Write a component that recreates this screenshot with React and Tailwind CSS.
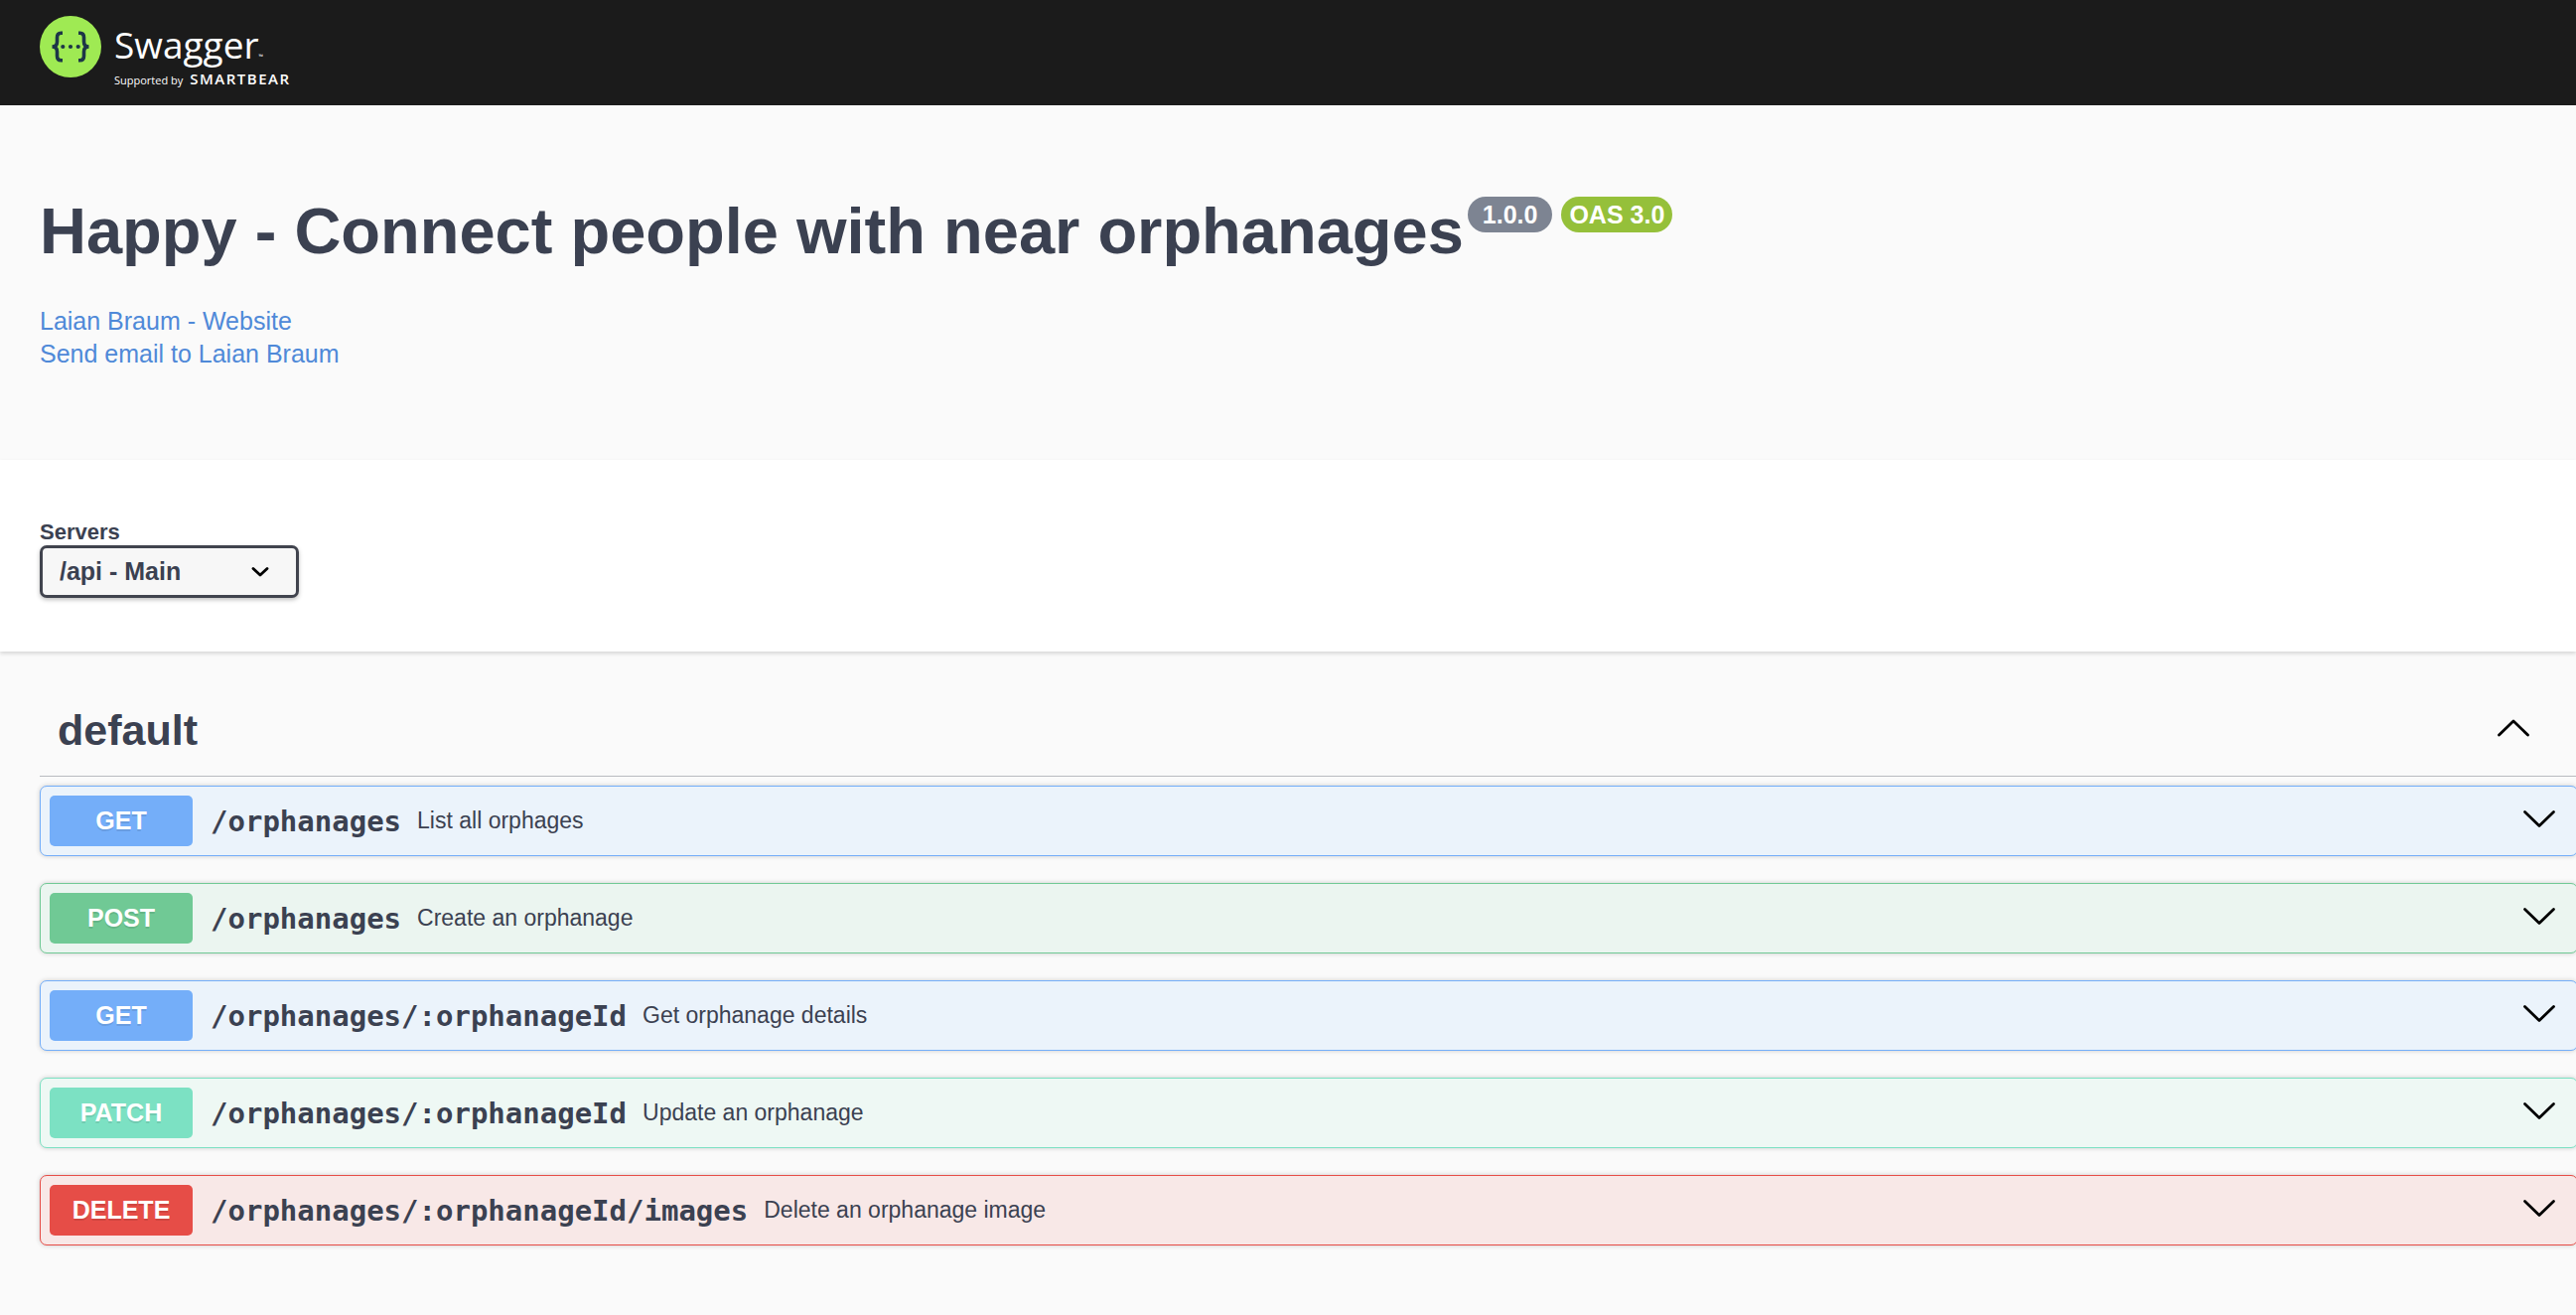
const INK = 'text-[#3b4151]';

const operations = [
  { method: 'GET', path: '/orphanages', summary: 'List all orphages', row: 'border-[#74aef9] bg-[#ebf3fb]', badge: 'bg-[#74aef9]' },
  { method: 'POST', path: '/orphanages', summary: 'Create an orphanage', row: 'border-[#70c995] bg-[#ebf5f0]', badge: 'bg-[#70c995]' },
  { method: 'GET', path: '/orphanages/:orphanageId', summary: 'Get orphanage details', row: 'border-[#74aef9] bg-[#ebf3fb]', badge: 'bg-[#74aef9]' },
  { method: 'PATCH', path: '/orphanages/:orphanageId', summary: 'Update an orphanage', row: 'border-[#7ce1c3] bg-[#eef8f4]', badge: 'bg-[#7ce1c3]' },
  { method: 'DELETE', path: '/orphanages/:orphanageId/images', summary: 'Delete an orphanage image', row: 'border-[#e64d47] bg-[#f8e8e7]', badge: 'bg-[#e64d47]' },
];

function Arrow({ up = false }) {
  return (
    <svg viewBox="0 0 36 36" className="size-9 shrink-0" fill="none" stroke="#000" strokeWidth="2.8" strokeLinecap="round" strokeLinejoin="round" aria-hidden="true">
      <path d={up ? 'M3.5 22 18 8l14.5 14' : 'M3.5 8.5 18 22.5l14.5-14'} />
    </svg>
  );
}

function Logo() {
  return (
    <a href="#" aria-label="Swagger" className="flex items-start text-white">
      <svg viewBox="0 0 62 62" className="size-[62px]" aria-hidden="true">
        <circle cx="31" cy="31" r="31" fill="#9fea53" />
        <g fill="none" stroke="#1d3647" strokeWidth="3.6">
          <path d="M23 17.2h-1.5c-3 0-4 1.6-4 4.5v4.300c0 3.200-1.500 5-5 5 3.500 0 5 1.800 5 5v4.300c0 2.900 1 4.500 4 4.500H23" />
          <path d="M39 17.200h1.500c3 0 4 1.600 4 4.500v4.300c0 3.200 1.500 5 5 5-3.500 0-5 1.800-5 5v4.300c0 2.900-1 4.500-4 4.500H39" />
        </g>
        <g fill="#1d3647">
          <circle cx="23.3" cy="31" r="2.1" />
          <circle cx="31" cy="31" r="2.1" />
          <circle cx="38.7" cy="31" r="2.1" />
        </g>
      </svg>
      <span className="ml-[13px] mt-[7px] flex flex-col">
        <span className="flex items-end font-['Open_Sans'] text-[37px] leading-[44px]">
          Swagger<span className="text-[6px] leading-[20px]">™</span>
        </span>
        <span className="mt-1 flex items-baseline gap-[7px] font-['Open_Sans'] text-[11px] leading-[16px]">
          Supported by <span className="text-[15px] font-semibold tracking-widest">SMARTBEAR</span>
        </span>
      </span>
    </a>
  );
}

export default function App() {
  return (
    <div className={`min-h-screen overflow-x-hidden bg-[#fafafa] font-['Liberation_Sans',sans-serif] ${INK}`}>
      <header className="flex h-[106px] items-start bg-[#1b1b1b] px-10 pt-4">
        <Logo />
      </header>

      <section className="px-10 pt-[89px] pb-[90px]">
        <div className="flex items-start gap-1">
          <h1 className="text-[65px] leading-[76px] font-bold">Happy - Connect people with near orphanages</h1>
          <div className="mt-[3px] flex gap-[9px] text-[25px] leading-[36px] font-bold text-white">
            <span className="rounded-[18px] bg-[#7d8492] px-[15px]">1.0.0</span>
            <span className="rounded-[18px] bg-[#95c03a] px-2">OAS 3.0</span>
          </div>
        </div>
        <div className="mt-[36px] flex flex-col items-start text-[25px] leading-[33px] text-[#4f89d8]">
          <a href="#website">Laian Braum - Website</a>
          <a href="#email">Send email to Laian Braum</a>
        </div>
      </section>

      <section className="bg-white px-10 pt-[60px] pb-[54px] shadow-[0_2px_4px_rgba(0,0,0,0.15)]">
        <label htmlFor="servers" className="block text-[22px] leading-[26px] font-bold">Servers</label>
        <div className="grid w-[261px] items-center">
          <select id="servers" className="col-start-1 row-start-1 h-[53px] w-full appearance-none rounded-[7px] border-3 border-[#41444e] bg-[#f7f7f7] pl-[17px] text-[25px] font-bold shadow-[0_2px_4px_rgba(0,0,0,0.25)]">
            <option>/api - Main</option>
          </select>
          <svg viewBox="0 0 20 12" className="pointer-events-none col-start-1 row-start-1 mr-[29px] h-3 w-5 justify-self-end" fill="none" stroke="#000" strokeWidth="2.8" strokeLinecap="round" strokeLinejoin="round" aria-hidden="true">
            <path d="M3 2.500 10 9l7-6.500" />
          </svg>
        </div>
      </section>

      <main className="pt-[36px] pl-10">
        <h2 className="mb-[9px] border-b border-[#b9bbc0]">
          <button type="button" className="flex w-full items-center justify-between pt-[18px] pr-[45px] pb-[20px] pl-[18px] text-[43px] leading-[51px] font-bold">
            default
            <Arrow up />
          </button>
        </h2>
        <div className="-mr-[2px] flex flex-col gap-[27px]">
          {operations.map((op) => (
            <button type="button" key={op.method + op.path} className={`flex h-[71px] items-center rounded-[7px] border pr-[20px] pl-[9px] text-left shadow-[0_0_5px_rgba(0,0,0,0.19)] ${op.row}`}>
              <span className={`w-36 rounded-[5px] text-center text-[25px] leading-[51px] font-bold text-white [text-shadow:0_2px_0_rgba(0,0,0,0.1)] ${op.badge}`}>{op.method}</span>
              <span className="ml-[18px] font-['DejaVu_Sans_Mono',monospace] text-[29px] leading-[34px] font-bold">{op.path}</span>
              <span className="ml-4 text-[23px] leading-[27px]">{op.summary}</span>
              <span className="ml-auto"><Arrow /></span>
            </button>
          ))}
        </div>
      </main>
    </div>
  );
}
